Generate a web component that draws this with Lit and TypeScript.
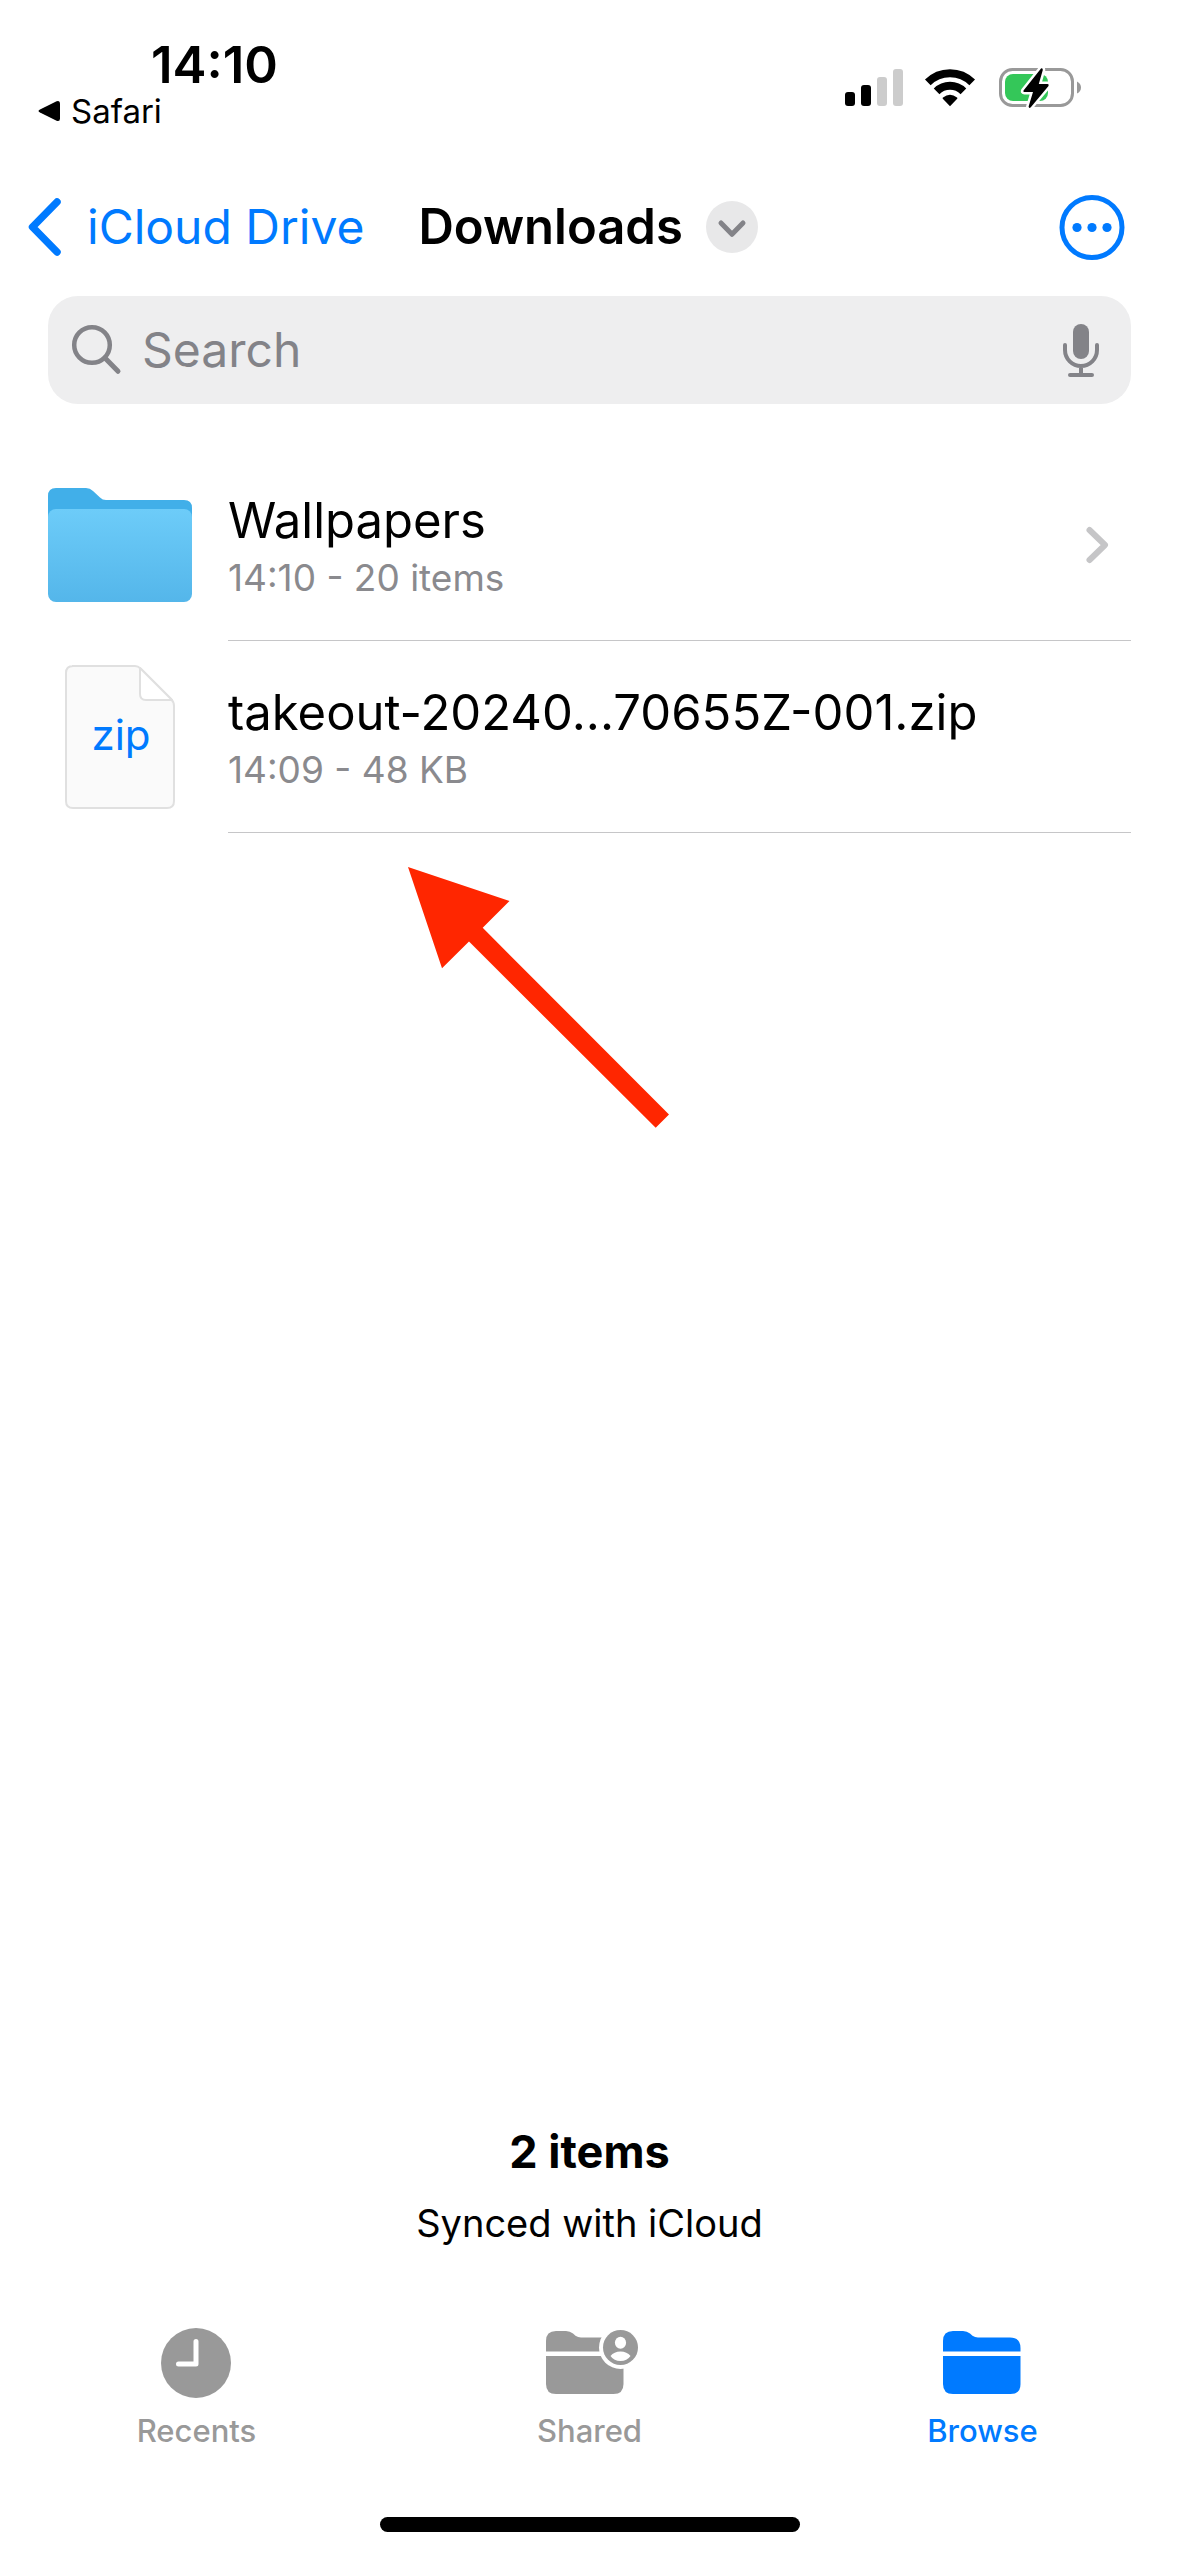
import { LitElement, html, svg, css } from "lit";
import { customElement, property } from "lit/decorators.js";

const FONT = css`Inter, "Liberation Sans", sans-serif`;

type Entry = { kind: "folder" | "zip"; name: string; detail: string };
type Tab = { id: "recents" | "shared" | "browse"; label: string };

const ENTRIES: Entry[] = [
  { kind: "folder", name: "Wallpapers", detail: "14:10 - 20 items" },
  { kind: "zip", name: "takeout-20240...70655Z-001.zip", detail: "14:09 - 48 KB" },
];

const TABS: Tab[] = [
  { id: "recents", label: "Recents" },
  { id: "shared", label: "Shared" },
  { id: "browse", label: "Browse" },
];

@customElement("status-bar")
export class StatusBar extends LitElement {
  static styles = css`
    :host {
      display: flex;
      justify-content: space-between;
      align-items: flex-start;
      padding: 36px 96px 0 38px;
      height: 134px;
      box-sizing: border-box;
      font-family: ${FONT};
      color: #000;
    }
    .left {
      display: flex;
      flex-direction: column;
    }
    .time {
      margin-left: 113px;
      font-size: 51px;
      line-height: 58px;
      font-weight: 600;
    }
    .back {
      display: flex;
      align-items: center;
      gap: 11px;
      color: inherit;
      text-decoration: none;
      font-size: 33px;
      line-height: 34px;
    }
    .icons {
      display: flex;
      align-items: center;
      gap: 20px;
      margin-top: 30px;
    }
    svg {
      display: block;
    }
  `;

  render() {
    return html`
      <div class="left">
        <time class="time">14:10</time>
        <a class="back" href="#safari">
          <svg width="22" height="22" viewBox="0 0 22 22" aria-hidden="true">
            <path d="M2 9.4 18.6 1.2Q22 0 22 3.4V18.6Q22 22 18.6 20.8L2 12.6Q-1 11 2 9.4Z" />
          </svg>
          <span>Safari</span>
        </a>
      </div>
      <div class="icons">
        <svg width="58" height="40" viewBox="0 0 58 40" role="img" aria-label="Signal">
          <rect x="0" y="24" width="10" height="14" rx="3" />
          <rect x="16" y="17" width="10" height="21" rx="3" />
          <rect x="32" y="9" width="10" height="29" rx="3" fill="#ccc" />
          <rect x="48" y="1" width="10" height="37" rx="3" fill="#ccc" />
        </svg>
        <svg width="54" height="40" viewBox="0 0 54 40" role="img" aria-label="Wi-Fi">
          <g fill="none" stroke="#000" stroke-width="8">
            <path d="M4.8 14.4A31.5 31.5 0 0 1 49.2 14.4" />
            <path d="M13.6 23.4A19 19 0 0 1 40.400 23.400" />
          </g>
          <path d="M27 38.2 19.8 30.7Q19.2 29.9 20 29.4Q27 24 34 29.4Q34.8 29.9 34.2 30.7Z" />
        </svg>
        <svg width="86" height="44" viewBox="0 0 86 44" role="img" aria-label="Battery charging">
          <rect x="3.5" y="3.5" width="72" height="36" rx="12" fill="none" stroke="#999" stroke-width="3" />
          <rect x="8" y="8" width="43" height="27" rx="8" fill="#34c759" />
          <path d="M80 15.5Q84 17.5 84 21.5Q84 25.5 80 27.5Z" fill="#999" />
          <path
            d="M44 2.500 26.500 24.500Q25.800 26 27.500 26H36L31.600 40.500Q32 43 34 41L51.500 20Q52.300 18 50.500 18H41.800L45.800 4Q45.800 1.500 44 2.500Z"
            stroke="#fff" stroke-width="5" paint-order="stroke" stroke-linejoin="round" />
        </svg>
      </div>
    `;
  }
}

@customElement("nav-bar")
export class NavBar extends LitElement {
  static styles = css`
    :host {
      display: flex;
      align-items: center;
      height: 162px;
      box-sizing: border-box;
      padding: 24px 54px 0 25px;
      font-family: ${FONT};
      font-size: 48px;
      line-height: 60px;
    }
    svg {
      display: block;
    }
    .back {
      display: flex;
      align-items: center;
      gap: 24px;
      color: #007aff;
      text-decoration: none;
    }
    .heading {
      display: flex;
      align-items: center;
      gap: 23px;
      margin-left: 54px;
    }
    h1 {
      margin: 0;
      font-size: 49px;
      font-weight: 600;
    }
    button {
      border: 0;
      padding: 0;
      background: none;
      border-radius: 50%;
    }
    .more {
      margin-left: auto;
    }
  `;

  render() {
    return html`
      <a class="back" href="#icloud-drive">
        <svg width="38" height="60" viewBox="0 0 38 60" aria-hidden="true">
          <path d="M32 5 7.500 30 32 55" fill="none" stroke="#007aff" stroke-width="7.5"
            stroke-linecap="round" stroke-linejoin="round" />
        </svg>
        <span>iCloud Drive</span>
      </a>
      <div class="heading">
        <h1>Downloads</h1>
        <button type="button" aria-label="Folder options">
          <svg width="52" height="52" viewBox="0 0 52 52">
            <circle cx="26" cy="26" r="26" fill="#e8e8e9" />
            <path d="M15 22 26 33.3 37 22" fill="none" stroke="#838388" stroke-width="5"
              stroke-linecap="round" stroke-linejoin="round" />
          </svg>
        </button>
      </div>
      <button class="more" type="button" aria-label="More">
        <svg width="66" height="66" viewBox="0 0 66 66" fill="#007aff">
          <circle cx="33" cy="33.5" r="30" fill="none" stroke="#007aff" stroke-width="5" />
          <circle cx="18" cy="33.5" r="4.6" />
          <circle cx="33" cy="33.5" r="4.6" />
          <circle cx="48" cy="33.5" r="4.6" />
        </svg>
      </button>
    `;
  }
}

@customElement("search-field")
export class SearchField extends LitElement {
  static styles = css`
    :host {
      display: block;
      padding: 0 48px;
    }
    .box {
      display: flex;
      align-items: center;
      height: 108px;
      padding: 0 30px 0 22px;
      border-radius: 30px;
      background: #eeeeef;
    }
    .box svg {
      display: block;
      flex: none;
    }
    input {
      flex: 1;
      min-width: 0;
      margin: 0 0 0 20px;
      padding: 0;
      border: 0;
      outline: 0;
      background: none;
      font-family: ${FONT};
      font-size: 48px;
      line-height: 60px;
      height: 60px;
      color: #000;
    }
    input::placeholder {
      color: #838388;
      opacity: 1;
    }
    button {
      border: 0;
      padding: 0;
      background: none;
    }
  `;

  render() {
    return html`
      <label class="box">
        <svg width="52" height="52" viewBox="0 0 52 52" aria-hidden="true">
          <g fill="none" stroke="#838388" stroke-width="4.5" stroke-linecap="round">
            <circle cx="22" cy="21" r="17.8" />
            <path d="M35 34 48 47.3" stroke-width="5" />
          </g>
        </svg>
        <input type="text" placeholder="Search" aria-label="Search" />
        <button type="button" aria-label="Dictate">
          <svg width="40" height="56" viewBox="0 0 40 56" fill="none" stroke="#838388" stroke-width="4"
            stroke-linecap="round">
            <rect x="12" y="2" width="16" height="35" rx="8" fill="#838388" stroke="none" />
            <path d="M4 23V28A16 16 0 0 0 36 28V23M20 44V53M9 53H31" />
          </svg>
        </button>
      </label>
    `;
  }
}

@customElement("file-row")
export class FileRow extends LitElement {
  @property({ attribute: false }) entry!: Entry;

  static styles = css`
    :host {
      display: block;
      font-family: ${FONT};
    }
    .row {
      display: flex;
      height: 192px;
      padding: 0 48px;
      color: #000;
      text-decoration: none;
    }
    .thumb {
      display: flex;
      align-items: center;
      justify-content: center;
      width: 144px;
      margin-right: 36px;
      flex: none;
    }
    svg {
      display: block;
    }
    .body {
      display: flex;
      flex: 1;
      min-width: 0;
      align-items: center;
      justify-content: space-between;
      padding-right: 20px;
      border-bottom: 1px solid #c6c6c8;
    }
    .name {
      font-size: 49px;
      line-height: 66px;
    }
    .detail {
      font-size: 37px;
      line-height: 48px;
      color: #8a8a8e;
    }
  `;

  private thumb() {
    return this.entry.kind === "folder"
      ? html`<svg width="144" height="144" viewBox="0 0 144 144" aria-hidden="true">
          <defs>
            <linearGradient id="front" x1="0" y1="0" x2="0" y2="1">
              <stop offset="0" stop-color="#6dccf9" />
              <stop offset="1" stop-color="#54b6ea" />
            </linearGradient>
          </defs>
          <path d="M0 23Q0 15 8 15H38Q42 15 45 18L52 24.5Q54.5 27 58 27H136Q144 27 144 35V70H0Z" fill="#41afe9" />
          <rect y="36" width="144" height="93" rx="8" fill="url(#front)" />
        </svg>`
      : html`<svg width="110" height="144" viewBox="0 0 110 144" aria-hidden="true">
          <path d="M7 1H70Q73 1 75.5 3.5L106 34Q109 37 109 41V136Q109 143 102 143H8Q1 143 1 136V8Q1 1 8 1Z"
            fill="#fafafa" stroke="#e0e0e0" stroke-width="2" />
          <path d="M75 3V29Q75 35 81 35H107Z" fill="#fff" stroke="#e0e0e0" stroke-width="2" stroke-linejoin="round" />
          <text x="56" y="85" text-anchor="middle" font-size="42" fill="#007aff">zip</text>
        </svg>`;
  }

  render() {
    const { kind, name, detail } = this.entry;
    return html`
      <a class="row" href="#${kind}">
        <div class="thumb">${this.thumb()}</div>
        <div class="body">
          <div>
            <div class="name">${name}</div>
            <div class="detail">${detail}</div>
          </div>
          ${kind === "folder"
            ? html`<svg width="26" height="40" viewBox="0 0 26 40" aria-hidden="true">
                <path d="M4.5 5 20 20 4.5 35" fill="none" stroke="#c5c5c7" stroke-width="6"
                  stroke-linecap="round" stroke-linejoin="round" />
              </svg>`
            : null}
        </div>
      </a>
    `;
  }
}

const FOLDER_TOP = "M0 21V10Q0 0 10 0H20Q24 0 27 2.5L29.5 4.7Q32 6.5 35 6.500H67Q77.5 6.5 77.5 17V20.5H0Z";
const FOLDER_FRONT = "M0 25H77.5V53Q77.5 63 67.500 63H10Q0 63 0 53Z";

@customElement("tab-bar")
export class TabBar extends LitElement {
  @property() current = "browse";

  static styles = css`
    :host {
      display: block;
      font-family: ${FONT};
    }
    nav {
      display: grid;
      grid-template-columns: repeat(3, 1fr);
    }
    .tab {
      display: flex;
      flex-direction: column;
      align-items: center;
      gap: 13px;
      color: #999;
      text-decoration: none;
      font-size: 31px;
      line-height: 36px;
      font-weight: 500;
    }
    .current {
      color: #007aff;
    }
    svg {
      display: block;
      fill: currentColor;
    }
  `;

  private icon(id: Tab["id"]) {
    const art = {
      recents: svg`<circle cx="47" cy="35" r="35" />
        <path d="M47 13.5V36H29.5" fill="none" stroke="#fff" stroke-width="5"
          stroke-linecap="round" stroke-linejoin="round" />`,
      shared: svg`<g transform="translate(4 3)">
          <path d=${FOLDER_TOP} /><path d=${FOLDER_FRONT} />
          <circle cx="74.5" cy="16.5" r="21.5" fill="#fff" />
          <circle cx="74.5" cy="16.5" r="17.5" />
          <ellipse cx="74.5" cy="11.8" rx="5.6" ry="6" fill="#fff" />
          <path d="M64.5 25Q68 20.5 74.5 20.5T84.5 25Q81 30 74.5 30T64.5 25Z" fill="#fff" />
        </g>`,
      browse: svg`<g transform="translate(8 3)"><path d=${FOLDER_TOP} /><path d=${FOLDER_FRONT} /></g>`,
    };
    return html`<svg width="96" height="72" viewBox="0 0 96 72" aria-hidden="true">${art[id]}</svg>`;
  }

  render() {
    return html`
      <nav aria-label="Sections">
        ${TABS.map(
          (tab) => html`<a class="tab ${tab.id === this.current ? "current" : ""}" href="#${tab.id}">
            ${this.icon(tab.id)}<span>${tab.label}</span>
          </a>`
        )}
      </nav>
    `;
  }
}

@customElement("app-root")
export class AppRoot extends LitElement {
  static styles = css`
    :host {
      display: flex;
      flex-direction: column;
      position: relative;
      min-height: 100vh;
      background: #fff;
      font-family: ${FONT};
      color: #000;
    }
    .files {
      flex: 1;
      padding-top: 45px;
    }
    .summary {
      text-align: center;
      padding-bottom: 78px;
    }
    .count {
      font-size: 45px;
      line-height: 60px;
      font-weight: 700;
      margin: 0 0 14px;
    }
    .sync {
      font-size: 38px;
      line-height: 54px;
      margin: 0;
    }
    .home {
      width: 420px;
      height: 15px;
      margin: 68px auto 24px;
      border-radius: 8px;
      background: #000;
    }
    .arrow {
      position: absolute;
      left: 408px;
      top: 867px;
    }
  `;

  render() {
    return html`
      <status-bar></status-bar>
      <nav-bar></nav-bar>
      <search-field></search-field>
      <main class="files">
        ${ENTRIES.map((entry) => html`<file-row .entry=${entry}></file-row>`)}
      </main>
      <footer class="summary">
        <p class="count">2 items</p>
        <p class="sync">Synced with iCloud</p>
      </footer>
      <tab-bar></tab-bar>
      <div class="home"></div>
      <svg class="arrow" width="262" height="262" viewBox="0 0 262 262" aria-hidden="true">
        <path d="M0 0 101.5 34 74.7 60.8 261 247.5 247.7 260.8 61 74.6 34 101.2Z" fill="#ff2600" />
      </svg>
    `;
  }
}
